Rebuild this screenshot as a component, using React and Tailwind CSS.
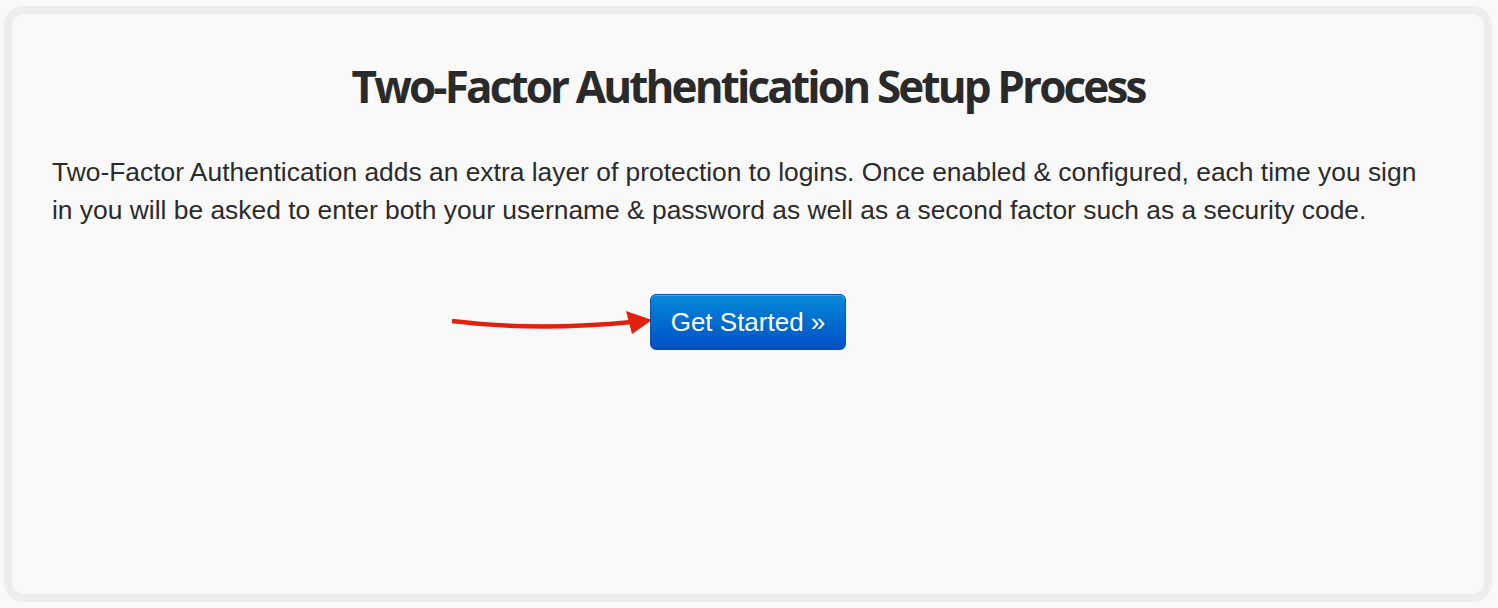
import React from "react";

const Arrow = () => (
  <svg width="204" height="30" viewBox="0 0 204 30" className="block">
    <path
      d="M2 14 C 50 20, 110 22, 182 15"
      fill="none"
      stroke="#e2200e"
      strokeWidth="4.5"
      strokeLinecap="butt"
    />
    <path d="M176 4 L 202 13 L 182 27 Z" fill="#e2200e" />
  </svg>
);

const App = () => {
  return (
    <div className="min-h-[608px] w-full bg-[#f9f9f9] pt-[6px] pl-[4px] pr-[6px]">
      <div className="h-[596px] rounded-[20px] border-[8px] border-[#ededed] bg-[#f9f9f9] px-[40px] pt-[46px]">
        <h1
          className="text-center text-[44px] leading-[52px] font-bold tracking-[-0.065em] text-[#2a2a2a]"
          style={{ fontFamily: '"Open Sans", "DejaVu Sans", sans-serif' }}
        >
          Two-Factor Authentication Setup Process
        </h1>
        <p
          className="mt-[41px] text-[26.4px] leading-[38px] text-[#2b2b2b]"
          style={{ fontFamily: '"Liberation Sans", Arial, sans-serif' }}
        >
          Two-Factor Authentication adds an extra layer of protection to logins. Once enabled &amp; configured, each time you sign
          <br />
          in you will be asked to enter both your username &amp; password as well as a second factor such as a security code.
        </p>
        <div className="mt-[65px] flex items-center pl-[398px]">
          <Arrow />
          <button
            className="ml-[-4px] h-[56px] w-[196px] rounded-[6px] border border-[#0a52b4] bg-gradient-to-b from-[#0b88d8] to-[#0250c6] text-[26px] text-white shadow-[inset_0_1px_0_rgba(255,255,255,0.25)]"
            style={{ fontFamily: '"Liberation Sans", Arial, sans-serif' }}
          >
            Get Started »
          </button>
        </div>
      </div>
    </div>
  );
};

export default App;
